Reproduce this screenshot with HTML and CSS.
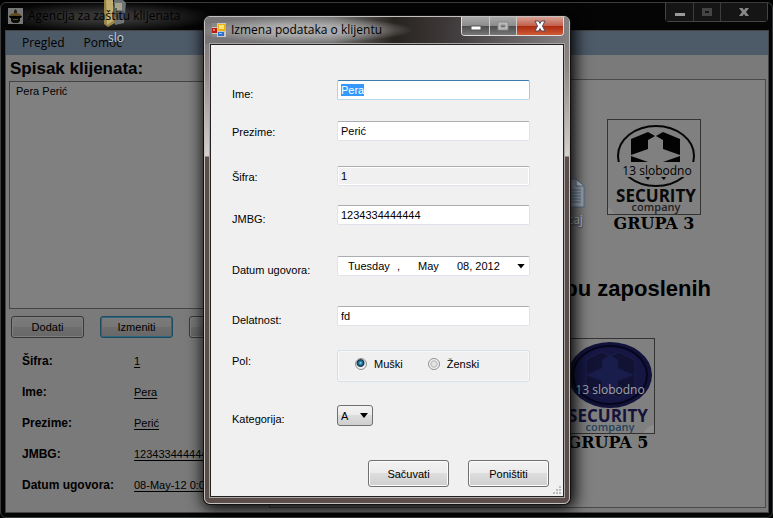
FILE: index.html
```html
<!DOCTYPE html>
<html lang="sr">
<head>
<meta charset="utf-8">
<title>Agencija za zaštitu klijenata</title>
<link rel="stylesheet" href="styles.css">
</head>
<body>
<main class="window">
  <header class="titlebar">
    <svg class="app-icon" viewBox="0 0 15 16" aria-hidden="true">
      <rect width="15" height="16" fill="#777"/>
      <path d="M6 5V3L7.500 1 9 3V5Z" fill="#2b2415"/>
      <path d="M1 8Q3 5 7.500 5T14 8L12 10H3Z" fill="#5c4a22"/>
      <path d="M1 8H14L13 10H2Z" fill="#000"/>
      <path d="M3 10H12V13L10 15H5L3 13Z" fill="#0c0b0a"/>
      <path d="M5 11H10V12H5Z" fill="#5c4a22"/>
    </svg>
    <h1 class="title">Agencija za zaštitu klijenata</h1>
    <div class="controls">
      <button class="control" aria-label="Minimize"><svg viewBox="0 0 12 12"><rect x="1" y="7" width="10" height="3" fill="#9a9a9a"/></svg></button>
      <button class="control" aria-label="Maximize"><svg viewBox="0 0 12 12"><path d="M1 2H11V10H1ZM4 5V7H8V5Z" fill="#444" fill-rule="evenodd"/></svg></button>
      <button class="control wide" aria-label="Close"><svg viewBox="0 0 12 12"><path d="M1 2H4.500L6 4 7.500 2H11L8 6 11 10H7.500L6 8 4.500 10H1L4 6Z" fill="#888"/></svg></button>
    </div>
  </header>
  <div class="client">
    <nav class="menu"><a href="#pregled">Pregled</a><a href="#pomoc">Pomoć</a></nav>
    <div class="columns">
      <section class="clients">
        <h2>Spisak klijenata:</h2>
        <ul class="list"><li>Pera Perić</li></ul>
        <div class="actions">
          <button class="push">Dodati</button>
          <button class="push current">Izmeniti</button>
          <button class="push" aria-label="Obrisati"></button>
        </div>
        <dl class="details">
          <dt>Šifra:</dt><dd>1</dd>
          <dt>Ime:</dt><dd>Pera</dd>
          <dt>Prezime:</dt><dd>Perić</dd>
          <dt>JMBG:</dt><dd>1234334444444</dd>
          <dt>Datum ugovora:</dt><dd>08-May-12 0:00</dd>
        </dl>
      </section>
      <section class="groups">
        <figure class="group first">
          <div class="logo">
            <svg viewBox="0 0 94 96" aria-hidden="true">
              <ellipse cx="49" cy="37" rx="38" ry="30" fill="none" stroke="#050505" stroke-width="2"/>
              <path d="M24 20 41 13 48 17 41 21V30L24 36ZM49 17 56 13 73 20V36L56 30V21ZM24 37 41 43H24ZM73 37 56 43H73ZM38 58H43L41 61ZM54 58H59L57 61Z" fill="#030303"/>
              <rect x="7" y="43" width="83" height="15" fill="#808080"/>
              <text x="49" y="83" class="brand">SECURITY</text>
              <text x="49" y="92" class="sub">company</text>
              <path d="M1 88 8 95H1Z" fill="#8b8b8b"/>
            </svg>
            <span class="free">13 slobodno</span>
          </div>
          <figcaption>GRUPA 3</figcaption>
        </figure>
        <h2>pu zaposlenih</h2>
        <figure class="group second">
          <div class="logo blue">
            <svg viewBox="0 0 94 96" aria-hidden="true">
              <ellipse cx="49" cy="37" rx="42" ry="33" fill="#11123a"/>
              <ellipse cx="49" cy="37" rx="37" ry="29" fill="#151742" stroke="#05061c" stroke-width="2"/>
              <path d="M25 22 40 14 49 18 58 14 74 22V51L58 60 49 56 40 60 25 51Z" fill="#121334" stroke="#1a1f4c" stroke-width="1"/>
              <path d="M49 17 57 22V30L73 37 57 43V53L49 57 41 53V43L25 37 41 30V22Z" fill="#181d4c"/>
              <text x="47" y="84" class="brand">SECURITY</text>
              <text x="49" y="93" class="sub">company</text>
              <path d="M83 95Q85 88 93 87V95Z" fill="#8c8c8c"/>
            </svg>
            <span class="free">13 slobodno</span>
          </div>
          <figcaption>GRUPA 5</figcaption>
        </figure>
      </section>
    </div>
  </div>
</main>

<div class="shortcut folder">
  <svg viewBox="0 0 26 28" aria-hidden="true">
    <path d="M1 0H10L12 23 5 27 1 24Z" fill="#a58f4c"/>
    <path d="M3 0H10V21L4 25Z" fill="#d3bf78"/>
    <path d="M11 0H20L23 3 21 23 12 25Z" fill="#777d80"/>
    <path d="M12 3H19V10H12Z" fill="#b9b49a"/>
    <path d="M15 11H21V20H14Z" fill="#4d585d"/>
    <path d="M10 8H14V17H10Z" fill="#5d6960"/>
  </svg>
  <span>slo</span>
</div>
<div class="shortcut document">
  <svg viewBox="0 0 24 30" aria-hidden="true">
    <path d="M1 1H15L23 8V29H1Z" fill="#a9b6c8" stroke="#566a86"/>
    <path d="M15 1V8H23Z" fill="#dbe2ea" stroke="#566a86"/>
    <path d="M4 12H20M4 15H20M4 18H20M4 21H20M4 24H20" stroke="#5b7696"/>
  </svg>
  <span>štaj</span>
</div>

<div class="dialog" role="dialog" aria-labelledby="dialog-title">
  <header class="titlebar">
    <svg class="app-icon" viewBox="0 0 14 14" aria-hidden="true">
      <rect width="14" height="14" fill="#c9c9c9"/>
      <path d="M0 0H5V4H0ZM0 11H5V14H0Z" fill="#888"/>
      <rect x="6" y="1" width="8" height="7" fill="#e9b317"/><rect x="7" y="2" width="5" height="4" fill="#ffe27a"/>
      <rect x="0" y="5" width="5" height="5" fill="#b51c12"/><rect x="1" y="6" width="2" height="2" fill="#f0796a"/>
      <rect x="6" y="9" width="6" height="4" fill="#2f6fd0"/><rect x="7" y="10" width="3" height="1" fill="#9cc4ff"/>
    </svg>
    <h1 class="title" id="dialog-title">Izmena podataka o klijentu</h1>
    <div class="controls">
      <button class="control" aria-label="Minimize"><svg viewBox="0 0 12 12"><rect x="1" y="6" width="10" height="4" fill="#fff" stroke="#555"/></svg></button>
      <button class="control" aria-label="Maximize"><svg viewBox="0 0 12 12"><path d="M1 2H11V10H1ZM4 5V7H8V5Z" fill="#bbb" stroke="#888" fill-rule="evenodd"/></svg></button>
      <button class="control wide close" aria-label="Close"><svg viewBox="0 0 12 12"><path d="M1 1H4.500L6 3.500 7.500 1H11L8.500 6 11 11H7.500L6 8.500 4.500 11H1L3.500 6Z" fill="#fff" stroke="#4a4a58"/></svg></button>
    </div>
  </header>
  <form class="form">
    <div class="fields">
      <label for="ime">Ime:</label><input class="text" id="ime" type="text" value="Pera">
      <label for="prezime" class="tight">Prezime:</label><input class="text" id="prezime" type="text" value="Perić">
      <label for="sifra" class="tight">Šifra:</label><input class="text" id="sifra" type="text" value="1" readonly>
      <label for="jmbg">JMBG:</label><input class="text" id="jmbg" type="text" value="1234334444444">
      <label for="datum">Datum ugovora:</label>
      <button class="date" id="datum" type="button"><span class="weekday">Tuesday</span><span class="comma">,</span><span class="month">May</span><span>08, 2012</span><i class="caret"></i></button>
      <label for="delatnost">Delatnost:</label><input class="text" id="delatnost" type="text" value="fd">
      <span class="label tight" id="pol">Pol:</span>
      <div class="radios" role="radiogroup" aria-labelledby="pol">
        <label><input type="radio" name="pol" checked>Muški</label>
        <label><input type="radio" name="pol">Ženski</label>
      </div>
      <label for="kategorija">Kategorija:</label>
      <div class="select"><select id="kategorija"><option>A</option></select><i class="caret"></i></div>
    </div>
    <div class="buttons">
      <button class="push" type="button">Sačuvati</button>
      <button class="push" type="button">Poništiti</button>
    </div>
    <svg class="grip" viewBox="0 0 9 9" aria-hidden="true"><path d="M6 0h2v2H6zM3 3h2v2H3zM6 3h2v2H6zM0 6h2v2H0zM3 6h2v2H3zM6 6h2v2H6z" fill="#bdbdbd"/></svg>
  </form>
</div>
<script src="script.js"></script>
</body>
</html>
```
FILE: styles.css
```css
* { box-sizing: border-box; }
body {
  margin: 0;
  min-height: 100vh;
  display: flex;
  background: #000;
  color: #000;
  font: 11px/14px "Liberation Sans", Arial, sans-serif;
  overflow: hidden;
}
h1, h2, ul, dl, dd, figure { margin: 0; padding: 0; }
button, input, select { font: inherit; color: inherit; margin: 0; }
.titlebar { display: flex; align-items: flex-start; }
.title { font: 12px/16px "Open Sans", "Noto Sans", sans-serif; white-space: nowrap; }
.controls { display: flex; margin-left: auto; }
.control {
  display: grid;
  place-items: center;
  width: 27px;
  padding: 0;
  border: 0;
}
.control.wide { width: 47px; }
.control svg { width: 12px; height: 12px; }

/* main window */
.window {
  flex: 1;
  display: flex;
  flex-direction: column;
  margin-top: 2px;
  padding: 0 4px 5px 5px;
  border: 1px solid #3a3d3d;
  border-radius: 6px;
  background: #050505;
}
.window > .titlebar { height: 28px; background: radial-gradient(ellipse 110px 15px at 100px 14px, #333 30%, transparent); }
.window > .titlebar .app-icon { width: 15px; height: 16px; margin: 5px 5px 0 2px; }
.window > .titlebar .title { position: relative; z-index: 2; margin-top: 5px; }
.window > .titlebar .controls {
  height: 19px;
  border: 1px solid #444;
  border-top: 0;
  border-radius: 0 0 4px 4px;
}
.window .control { background: #151515; }
.window .control + .control { border-left: 1px solid #3c3c3c; }
.client {
  flex: 1;
  display: flex;
  flex-direction: column;
  background: #7a7a7a;
  outline: 1px solid #444;
}
.menu {
  display: flex;
  gap: 19px;
  height: 24px;
  padding: 4px 16px;
  background: #4d5a68;
  font: 12px/16px "Open Sans", "Noto Sans", sans-serif;
}
.menu a { color: #000; text-decoration: none; }
.columns { flex: 1; display: grid; grid-template-columns: 263px 1fr; }
.clients { padding: 4px 0 0 3px; }
.clients h2 { padding-left: 1px; font-size: 17px; line-height: 20px; }
.list {
  height: 228px;
  margin-top: 2px;
  padding: 2px 6px;
  border: 1px solid #444;
  background: #808080;
  list-style: none;
}
.push {
  border: 1px solid #707070;
  border-radius: 3px;
  background: linear-gradient(#f2f2f2, #ebebeb 50%, #ddd 50%, #cfcfcf);
  box-shadow: inset 0 0 0 1px #fcfcfc;
}
.actions {
  display: grid;
  grid-template-columns: repeat(3, 73px);
  gap: 16px;
  margin: 7px 0 0 2px;
}
.actions .push {
  height: 22px;
  padding: 0;
  border-color: #383838;
  background: linear-gradient(#7b7b7b, #767676 50%, #6e6e6e 50%, #686868);
  box-shadow: inset 0 0 0 1px #7f7f7f;
}
.actions .current { border-color: #1e4a5e; box-shadow: inset 0 0 0 1px #2c6880; }
.details {
  display: grid;
  grid-template-columns: 112px 1fr;
  row-gap: 17px;
  margin: 16px 0 0 13px;
}
.details dt { font-size: 12px; font-weight: bold; }
.details dd { text-decoration: underline; text-underline-offset: 2px; }
.groups {
  display: flex;
  flex-direction: column;
  align-items: flex-end;
  margin: 24px 2px 4px 0;
  border: 1px solid #4a4a4a;
  background: #808080;
}
.groups h2 { margin: 43px 54px 0 0; font-size: 22px; line-height: 26px; }
.group { display: flex; flex-direction: column; align-items: center; }
.group.first { margin: 39px 64px 0 0; }
.group.second { margin: 36px 110px 0 0; }
.group figcaption { font: bold 16px/18px "DejaVu Serif", serif; white-space: nowrap; }
.logo { display: grid; width: 94px; height: 96px; outline: 1px solid #333; outline-offset: -1px; }
.logo > * { grid-area: 1 / 1; }
.logo svg { width: 94px; height: 96px; }
.free { place-self: center; padding: 8px 0 0 6px; font: 12px/16px "Open Sans", "Noto Sans", sans-serif; }
.brand { font: bold 17px "Open Sans", sans-serif; text-anchor: middle; fill: #080808; }
.sub { font: 600 11px "Open Sans", sans-serif; text-anchor: middle; fill: #222; }
.blue .free { padding-left: 4px; color: #a3a3a3; }
.blue .brand { fill: #15123a; }
.blue .sub { fill: #24425e; }

/* desktop shortcuts showing through the glass */
.shortcut {
  position: absolute;
  z-index: 1;
  display: flex;
  flex-direction: column;
  align-items: center;
  color: #d5dce4;
  font: 12px/16px "Open Sans", "Noto Sans", sans-serif;
  text-shadow: 0 1px 2px #222;
}
.folder { left: 103px; top: 0; opacity: .9; }
.folder svg { width: 26px; height: 28px; margin-bottom: 2px; }
.document { left: 561px; top: 178px; opacity: .85; }
.document svg { width: 24px; height: 30px; margin-bottom: 4px; }

/* edit dialog */
.dialog {
  position: absolute;
  z-index: 3;
  left: 204px;
  top: 16px;
  width: 366px;
  padding: 0 5px 6px;
  border: 1px solid #c4c0be;
  border-radius: 6px;
  background: linear-gradient(#777 0, #8f8585 50px, #d5d1ce 139px, #5a4d4a 140px);
  box-shadow: 0 0 0 1px #111, 2px 2px 16px 3px #000;
}
.dialog > .titlebar {
  height: 27px;
  margin: 0 -5px;
  padding: 0 5px;
  border-radius: 5px 5px 0 0;
  background:
    radial-gradient(ellipse 110px 13px at 98px 13px, #aaa 40%, transparent),
    linear-gradient(90deg, #767476, #777 35%, #27231f 52%, #443f40 70%, #858081);
}
.dialog .app-icon { width: 14px; height: 14px; margin: 6px 5px 0 2px; }
.dialog .title { margin-top: 5px; }
.dialog .controls {
  overflow: hidden;
  height: 19px;
  border: 1px solid #ddd;
  border-top: 0;
  border-radius: 0 0 4px 4px;
}
.dialog .control { background: linear-gradient(#aaa, #8c8c8c 48%, #4e4e50 52%, #777); }
.dialog .control + .control { border-left: 1px solid #ccc; }
.dialog .close { background: linear-gradient(#d9a194, #c2614d 48%, #ab2a10 52%, #cf5c37); }
.form {
  position: relative;
  padding: 35px 14px 9px 21px;
  border: 1px solid #222;
  outline: 1px solid #aaa5a3;
  background: #f0f0f0;
}
.fields {
  display: grid;
  grid-template-columns: 105px 193px;
  grid-template-rows: 41px 45px 39px 51px 50px 44px 55px 55px;
  align-items: start;
}
.fields > label, .label { padding-top: 7px; }
.fields > .tight { padding-top: 4px; }
.text, .date {
  width: 100%;
  height: 20px;
  padding: 0 3px;
  border: 1px solid #e2e3ea;
  border-top-color: #abadb3;
  border-radius: 2px;
  background: #fff;
}
.text:focus { outline: 0; border-color: #3d7bad #a4c9e3 #b7d9ed #b5cfe7; }
.text::selection { background: #39f; color: #fff; }
.text:read-only { background: #f0f0f0; box-shadow: inset 0 0 0 1px #fff; }
.date { display: flex; align-items: center; padding: 0 4px 0 10px; text-align: left; }
.weekday { width: 49px; }
.comma { width: 21px; }
.month { width: 39px; }
.caret {
  width: 8px;
  height: 5px;
  background: #000;
  clip-path: polygon(0 0, 100% 0, 50% 100%);
}
.date .caret { margin-left: auto; }
.radios {
  display: flex;
  gap: 25px;
  height: 32px;
  padding: 0 17px 4px;
  border: 1px solid #d5dfe8;
  border-radius: 3px;
  box-shadow: inset 0 0 0 1px #f8f8f8;
}
.radios label { display: flex; align-items: center; gap: 7px; }
.radios input {
  appearance: none;
  width: 12px;
  height: 12px;
  border: 1px solid #8e8f8f;
  border-radius: 50%;
  background: radial-gradient(circle, #e4e4e4 25%, #bbb 45%, #f4f4f4 60%);
}
.radios input:checked { background: radial-gradient(circle at 45% 40%, #8fe0f5 0, #237fa8 20%, #12304d 42%, #eee 55%); }
.select { display: grid; width: 36px; height: 21px; align-items: center; }
.select > * { grid-area: 1 / 1; }
.select select {
  appearance: none;
  width: 36px;
  height: 21px;
  padding: 0 3px;
  border: 1px solid #707070;
  border-radius: 3px;
  background: linear-gradient(#f2f2f2, #ebebeb 50%, #ddd 50%, #cfcfcf);
}
.select .caret { justify-self: end; margin-right: 5px; pointer-events: none; }
.buttons { display: flex; justify-content: flex-end; gap: 19px; }
.buttons .push { width: 81px; height: 27px; padding: 0; }
.grip { position: absolute; right: 1px; bottom: 1px; width: 9px; height: 9px; }
```
FILE: script.js
```js
const firstField = document.getElementById("ime");
firstField.focus();
firstField.select();
```
